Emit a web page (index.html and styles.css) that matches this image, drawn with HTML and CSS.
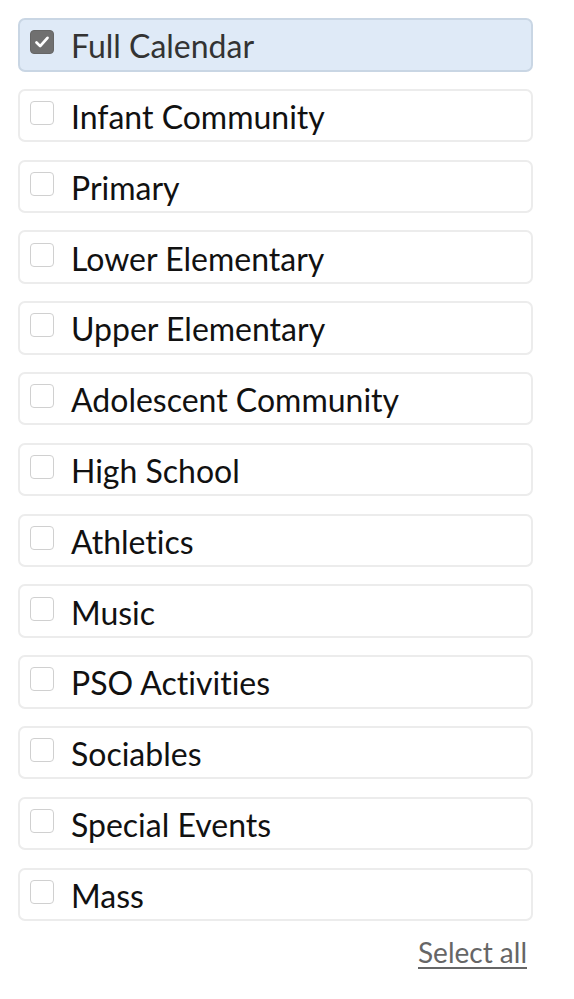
FILE: index.html
```html
<!DOCTYPE html>
<html>
<head>
<meta charset="utf-8">
<link rel="stylesheet" href="styles.css">
</head>
<body>
<div class="filters">
  <label class="item checked"><span class="box"><svg viewBox="0 0 24 24" width="24" height="24"><path d="M6 12.5l4 4 8-9" fill="none" stroke="#fff" stroke-width="3" stroke-linecap="round" stroke-linejoin="round"/></svg></span><span class="label">Full Calendar</span></label>
  <label class="item"><span class="box"></span><span class="label">Infant Community</span></label>
  <label class="item"><span class="box"></span><span class="label">Primary</span></label>
  <label class="item"><span class="box"></span><span class="label">Lower Elementary</span></label>
  <label class="item"><span class="box"></span><span class="label">Upper Elementary</span></label>
  <label class="item"><span class="box"></span><span class="label">Adolescent Community</span></label>
  <label class="item"><span class="box"></span><span class="label">High School</span></label>
  <label class="item"><span class="box"></span><span class="label">Athletics</span></label>
  <label class="item"><span class="box"></span><span class="label">Music</span></label>
  <label class="item"><span class="box"></span><span class="label">PSO Activities</span></label>
  <label class="item"><span class="box"></span><span class="label">Sociables</span></label>
  <label class="item"><span class="box"></span><span class="label">Special Events</span></label>
  <label class="item"><span class="box"></span><span class="label">Mass</span></label>
  <div class="actions"><a class="select-all" href="#">Select all</a></div>
</div>
</body>
</html>
```
FILE: styles.css
```css
html, body {
  margin: 0;
  padding: 0;
  background: #fff;
}
body {
  font-family: Lato, "Open Sans", sans-serif;
  font-variant-ligatures: none;
}
.filters {
  width: 515px;
  padding: 18px 0 0 18px;
  display: flex;
  flex-direction: column;
  gap: 17.3px;
}
.item {
  box-sizing: border-box;
  height: 53.5px;
  border: 2px solid #ececec;
  border-radius: 7px;
  background: #fff;
  display: flex;
  align-items: center;
  padding-left: 10px;
}
.item.checked {
  background: #dfeaf7;
  border-color: #c9d6e4;
}
.box {
  box-sizing: border-box;
  width: 24px;
  height: 24px;
  border: 1.5px solid #d0d0d0;
  border-radius: 4px;
  background: #fff;
  margin-top: -5px;
  display: flex;
  align-items: center;
  justify-content: center;
  flex: none;
}
.item.checked .box {
  background: #707070;
  border-color: #666;
}
.label {
  margin-left: 17px;
  font-size: 32px;
  color: #111;
  line-height: 1;
  margin-top: 3px;
}
.item.checked .label {
  color: #333;
}
.actions {
  display: flex;
  justify-content: flex-end;
  padding-right: 6px;
  margin-top: -3px;
}
.select-all {
  font-size: 28px;
  color: #666;
  text-decoration: underline;
  text-underline-offset: 4px;
  text-decoration-thickness: 2px;
}
```
